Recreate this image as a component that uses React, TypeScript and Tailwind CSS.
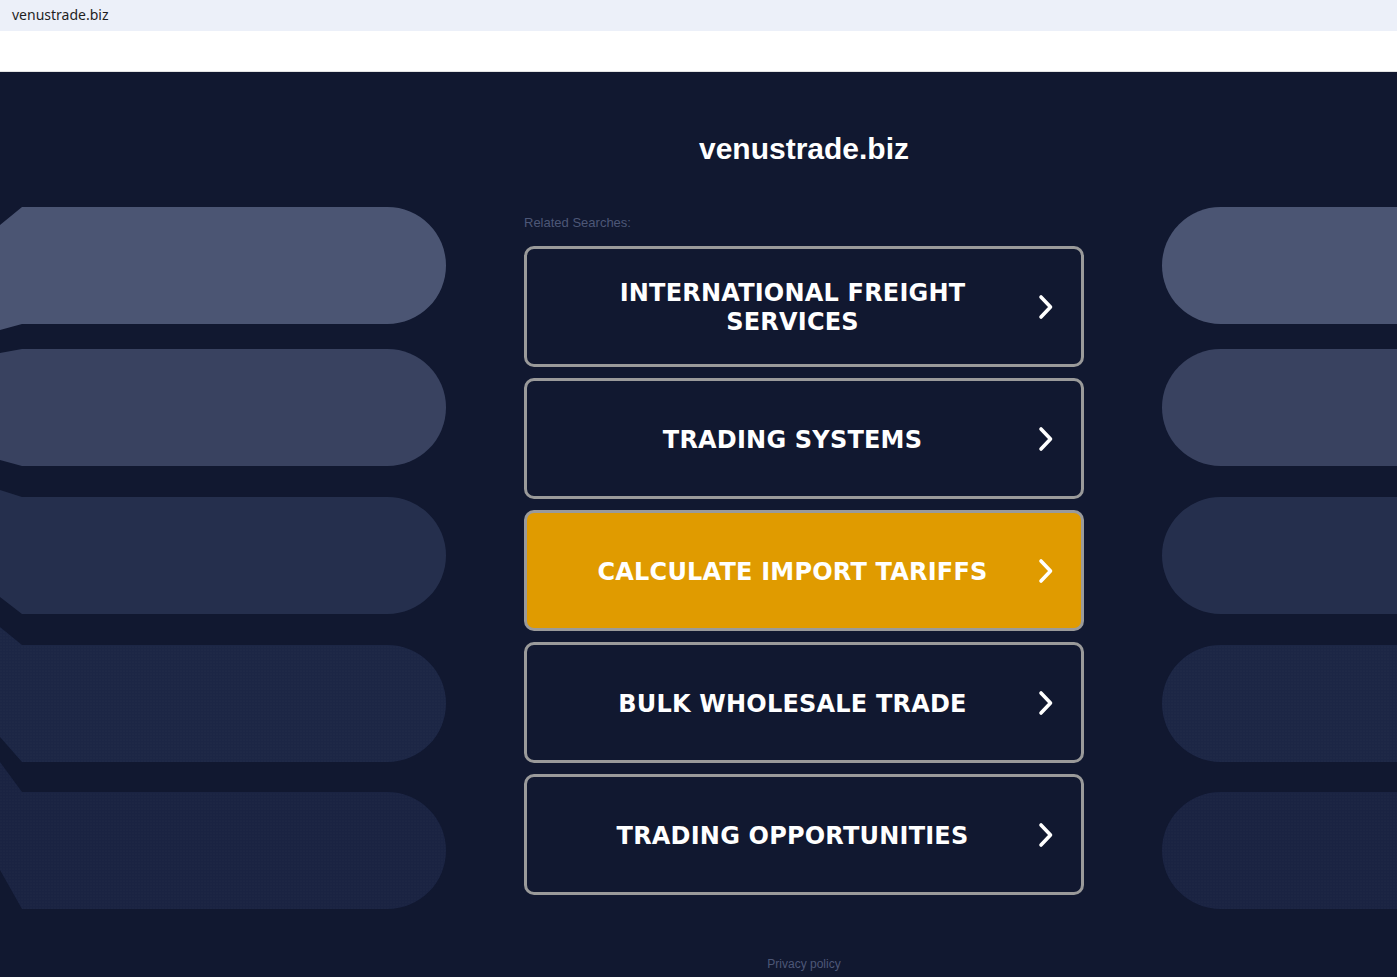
import React from "react";

type Bar = { top: number; bottom: number; topL: number; bottomL: number; fill: string; dots?: boolean };

// decor geometry, y relative to the svg top (page y 190)
const bars: Bar[] = [
  { top: 17, bottom: 134, topL: 35, bottomL: 140, fill: "#4b5573" },
  { top: 159, bottom: 276, topL: 163, bottomL: 270, fill: "#394260" },
  { top: 307, bottom: 424, topL: 300, bottomL: 407, fill: "#252f4d" },
  { top: 455, bottom: 572, topL: 437, bottomL: 547, fill: "#1c2645", dots: true },
  { top: 602, bottom: 719, topL: 572, bottomL: 680, fill: "#1a2342", dots: true },
];

const links = [
  "International Freight Services",
  "Trading Systems",
  "Calculate Import Tariffs",
  "Bulk Wholesale Trade",
  "Trading Opportunities",
];

function Dots() {
  return (
    <defs>
      <pattern id="dots" width="3" height="3" patternUnits="userSpaceOnUse">
        <circle cx="1" cy="1" r="0.5" fill="#ffffff" fillOpacity="0.045" />
      </pattern>
    </defs>
  );
}

function LeftDecor() {
  return (
    <svg width="446" height="730" viewBox="0 0 446 730" className="mt-[118px] shrink-0">
      <Dots />
      {bars.map((b, i) => {
        const r = (b.bottom - b.top) / 2;
        const d = `M0,${b.topL} L22,${b.top} L${446 - r},${b.top} A${r},${r} 0 0 1 ${446 - r},${b.bottom} L22,${b.bottom} L0,${b.bottomL} Z`;
        return (
          <g key={i}>
            <path d={d} fill={b.fill} />
            {b.dots && <path d={d} fill="url(#dots)" />}
          </g>
        );
      })}
    </svg>
  );
}

function RightDecor() {
  return (
    <svg width="446" height="730" viewBox="0 0 446 730" className="mt-[118px] shrink-0">
      {bars.map((b, i) => {
        const r = (b.bottom - b.top) / 2;
        const d = `M446,${b.top} L${r},${b.top} A${r},${r} 0 0 0 ${r},${b.bottom} L446,${b.bottom} Z`;
        return (
          <g key={i}>
            <path d={d} fill={b.fill} />
            {b.dots && <path d={d} fill="url(#dots)" />}
          </g>
        );
      })}
    </svg>
  );
}

function Chevron() {
  return (
    <svg width="15" height="26" viewBox="0 0 15 26" className="shrink-0">
      <polyline
        points="3,3 12.5,13 3,23"
        fill="none"
        stroke="#ffffff"
        strokeWidth="3.6"
        strokeLinecap="round"
        strokeLinejoin="round"
      />
    </svg>
  );
}

export default function App() {
  return (
    <div className="min-h-[977px] w-[1397px] overflow-hidden bg-[#111830]">
      <div className="flex h-[31px] items-center bg-[#ecf0f9] pb-[3px] pl-3 font-['Noto_Sans',sans-serif] text-[14px] text-[#1f1f1f]">
        venustrade.biz
      </div>
      <div className="h-[41px] border-b border-[#e3e3e3] bg-white" />

      <div className="flex h-[905px] items-start">
        <LeftDecor />

        <main className="ml-[78px] flex w-[560px] shrink-0 flex-col">
          <h1 className="mt-[60px] text-center font-['Liberation_Sans',Arial,sans-serif] text-[30px] leading-[34px] font-bold text-white">
            venustrade.biz
          </h1>
          <p className="mt-[49px] font-['Liberation_Sans',Arial,sans-serif] text-[13px] leading-4 text-[#4d5777]">
            Related Searches:
          </p>
          <div className="mt-[15px] flex flex-col gap-[11px]">
            {links.map((label, i) => (
              <a
                key={label}
                href="#"
                className={
                  "flex h-[121px] items-center rounded-[10px] border-[3px] border-[#9a9a9a] pr-[28px] pl-[62px] " +
                  (i === 2 ? "bg-[#e09b00]" : "bg-[#111830]")
                }
              >
                <span className="flex-1 pt-[3px] text-center font-['DejaVu_Sans',Verdana,sans-serif] text-[24px] leading-[29px] font-bold tracking-[0.2px] text-white uppercase">
                  {label}
                </span>
                <span className="ml-[42px] flex">
                  <Chevron />
                </span>
              </a>
            ))}
          </div>
          <p className="mt-[61px] text-center font-['Liberation_Sans',Arial,sans-serif] text-[12px] leading-4 text-[#4d5777]">
            Privacy policy
          </p>
        </main>

        <div className="ml-[78px]">
          <RightDecor />
        </div>
      </div>
    </div>
  );
}
